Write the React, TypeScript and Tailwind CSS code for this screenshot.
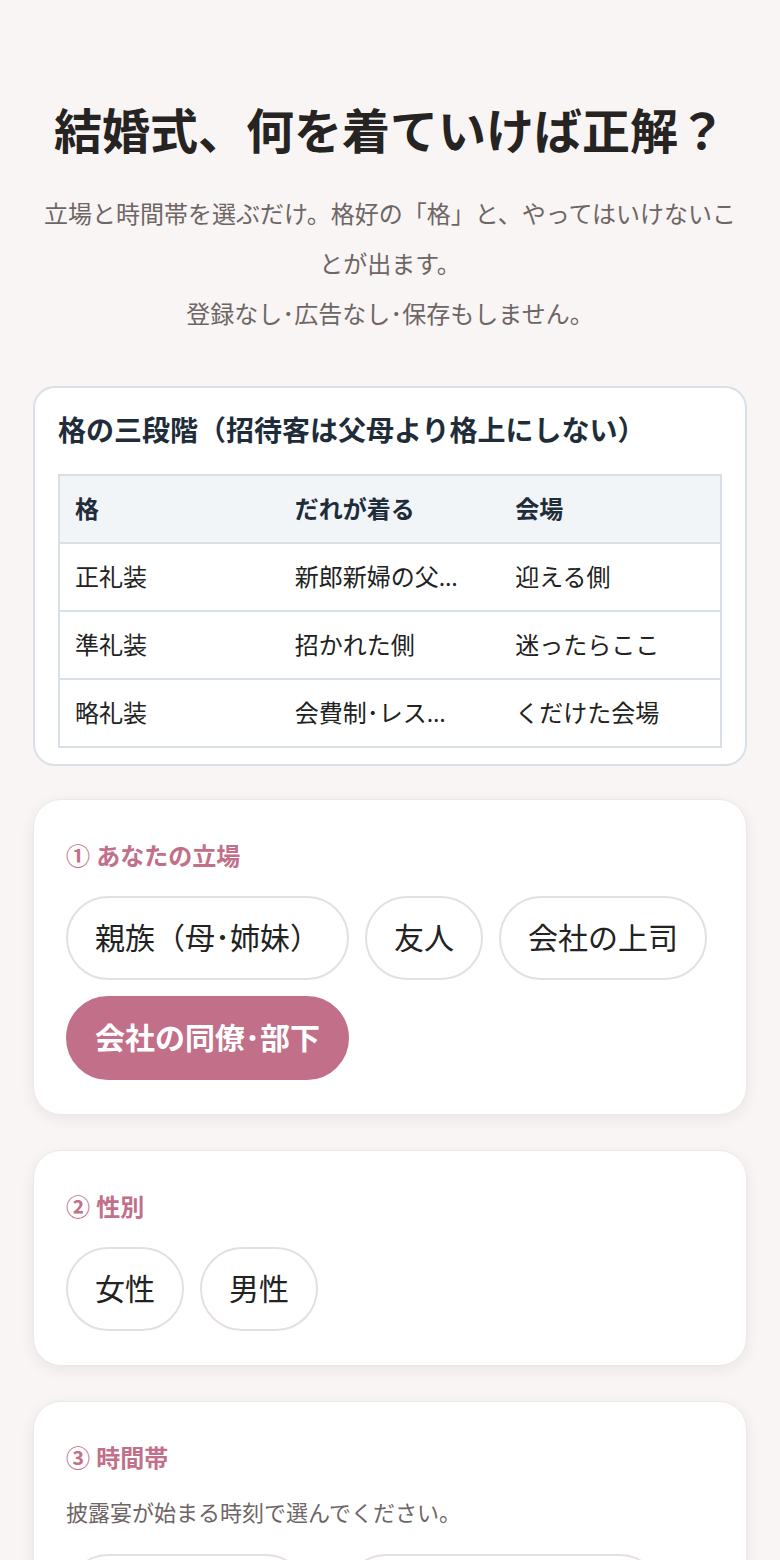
import { useState } from 'react'

// 格の早見表
const RANKS = [
  { rank: '正礼装', who: '新郎新婦の父母・仲人', place: '迎える側' },
  { rank: '準礼装', who: '招かれた側', place: '迷ったらここ' },
  { rank: '略礼装', who: '会費制･レストラン婚', place: 'くだけた会場' },
]

const ROLES = ['親族（母･姉妹）', '友人', '会社の上司', '会社の同僚･部下']
const GENDERS = ['女性', '男性']
const TIMES = ['昼（〜16時）', '夕方･夜（16時〜）']

const font = "font-['Noto_Sans','Noto_Sans_CJK_JP',sans-serif]"

function Chip({ label, active, onClick }: { label: string; active: boolean; onClick: () => void }) {
  return (
    <button
      type="button"
      onClick={onClick}
      className={`flex h-[84px] items-center rounded-full border-2 px-[27px] text-[30px] leading-none ${
        active ? 'border-[#c26f8a] bg-[#c26f8a] font-bold text-white' : 'border-[#e6dfdf] bg-white text-[#222]'
      }`}
    >
      {label}
    </button>
  )
}

function Step({ title, children }: { title: string; children: React.ReactNode }) {
  return (
    <section className="rounded-[28px] border border-[#eee7e7] bg-white px-[32px] pt-[32px] pb-[34px] shadow-[0_4px_14px_rgba(80,50,50,0.08)]">
      <h2 className="text-[24px] leading-[48px] font-bold text-[#c26f8a]">{title}</h2>
      {children}
    </section>
  )
}

export default function App() {
  const [role, setRole] = useState(3)
  const [gender, setGender] = useState(-1)
  const [time, setTime] = useState(-1)

  return (
    <div className={`min-h-screen bg-[#f8f5f4] px-[33px] pt-[97px] pb-16 ${font}`}>
      <h1 className="text-center text-[48px] leading-[68px] font-bold whitespace-nowrap text-[#262323]">
        結婚式、何を着ていけば正解？
      </h1>
      <p className="mt-[24px] text-center text-[24px] leading-[50px] text-[#6e6565]">
        立場と時間帯を選ぶだけ。格好の「格」と、やってはいけないことが出ます。
        <br />
        登録なし･広告なし･保存もしません。
      </p>

      {/* 格の三段階 */}
      <section className="mt-[47px] rounded-[22px] border-2 border-[#d8dfe6] bg-white px-[23px] pt-[22px] pb-[16px]">
        <h2 className="text-[28px] leading-[40px] font-bold text-[#1f2d3a]">格の三段階（招待客は父母より格上にしない）</h2>
        <table className="mt-[24px] w-full table-fixed border-collapse border-2 border-[#d8dfe6] text-[24px] text-[#222]">
          <thead>
            <tr className="bg-[#f1f5f8]">
              {['格', 'だれが着る', '会場'].map((h) => (
                <th key={h} className="h-[68px] px-[15px] text-left font-bold text-[#1f2d3a]">
                  {h}
                </th>
              ))}
            </tr>
          </thead>
          <tbody>
            {RANKS.map((r) => (
              <tr key={r.rank} className="border-t-2 border-[#d8dfe6]">
                <td className="h-[68px] px-[15px]">{r.rank}</td>
                <td className="h-[68px] px-[15px]">
                  <div className="truncate pr-[18px]">{r.who}</div>
                </td>
                <td className="h-[68px] px-[15px]">
                  <div className="truncate">{r.place}</div>
                </td>
              </tr>
            ))}
          </tbody>
        </table>
      </section>

      <div className="mt-[33px] flex flex-col gap-[35px]">
        <Step title="① あなたの立場">
          <div className="mt-[16px] flex flex-wrap gap-[16px]">
            {ROLES.map((r, i) => (
              <Chip key={r} label={r} active={role === i} onClick={() => setRole(i)} />
            ))}
          </div>
        </Step>

        <Step title="② 性別">
          <div className="mt-[16px] flex flex-wrap gap-[16px]">
            {GENDERS.map((g, i) => (
              <Chip key={g} label={g} active={gender === i} onClick={() => setGender(i)} />
            ))}
          </div>
        </Step>

        <Step title="③ 時間帯">
          <p className="mt-[12px] text-[22px] leading-[36px] text-[#6e6565]">披露宴が始まる時刻で選んでください。</p>
          <div className="mt-[24px] flex flex-wrap gap-[36px]">
            {TIMES.map((t, i) => (
              <Chip key={t} label={t} active={time === i} onClick={() => setTime(i)} />
            ))}
          </div>
        </Step>
      </div>
    </div>
  )
}
